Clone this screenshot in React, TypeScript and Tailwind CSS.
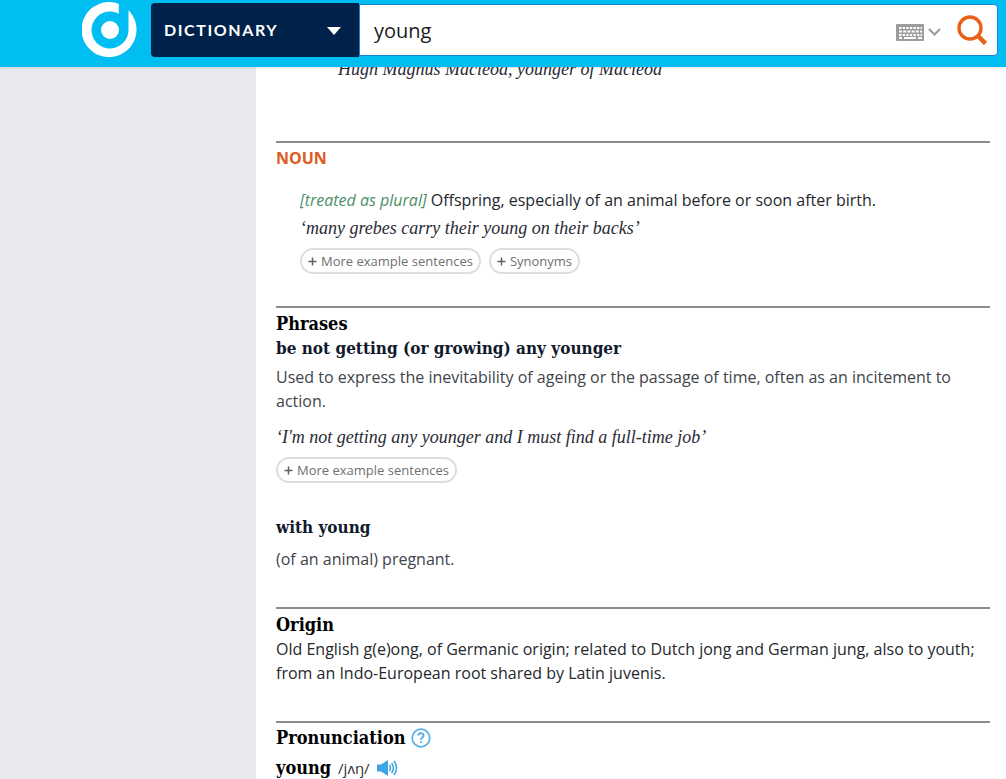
import type { ReactNode } from "react";

const serif = "font-['DejaVu_Serif_Condensed','DejaVu_Serif',serif]";
const quote = "font-['Liberation_Serif',serif] text-lg leading-6 italic text-[#2a2b36]";

function Logo() {
  return (
    <svg viewBox="0 0 56 56" className="size-14" aria-hidden="true">
      <path d="M36.8 1.9A27.5 27.5 0 1 0 46.5 8.2V28A18.5 18.5 0 1 1 36.8 11.7Z" fill="#fff" />
      <circle cx="28" cy="28" r="9" fill="#fff" />
    </svg>
  );
}

function KeyboardIcon() {
  return (
    <svg viewBox="0 0 28 17" className="h-[17px] w-7" aria-hidden="true">
      <rect width="28" height="17" rx="1" fill="#9c9c9c" />
      <g stroke="#fff" strokeWidth="2">
        <path d="M3 4H26" strokeDasharray="2.4 1.2" />
        <path d="M3 7.5H26" strokeDasharray="3 1.2" />
        <path d="M3 11H26" strokeDasharray="2.4 1.2" />
        <path d="M3 14H6M8 14H20M22 14H26" />
      </g>
    </svg>
  );
}

function Pill({ children }: { children: ReactNode }) {
  return (
    <button
      type="button"
      className="flex h-[26px] items-center gap-1 rounded-full border-2 border-[#dedede] px-1.5 text-[13px] text-[#707070]"
    >
      <svg viewBox="0 0 9 9" className="size-[9px]" aria-hidden="true">
        <path d="M4.5 0.5V8.5M0.5 4.5H8.5" stroke="#606060" strokeWidth="1.5" />
      </svg>
      {children}
    </button>
  );
}

function Section({ children, className }: { children: ReactNode; className: string }) {
  return <section className={`border-t-2 border-[#8c8c8c] ${className}`}>{children}</section>;
}

function Heading({ children }: { children: ReactNode }) {
  return <h2 className={`${serif} text-lg leading-6 font-bold text-black`}>{children}</h2>;
}

function Phrase({ children }: { children: ReactNode }) {
  return <h3 className={`${serif} text-[17px] leading-6 font-bold text-[#101a2c]`}>{children}</h3>;
}

export default function App() {
  return (
    <div className="flex h-screen flex-col overflow-hidden bg-white font-['Open_Sans',sans-serif] text-base leading-6 text-[#40454b]">
      <header className="relative z-10 flex shrink-0 items-start bg-[#00bdf2] pt-[3px] pr-2 pb-[9px] pl-[82px] shadow-sm">
        <a href="#home" aria-label="Dictionary home" className="-mt-px mr-[13px] block">
          <Logo />
        </a>
        <div className="relative w-52 shrink-0">
          <select
            aria-label="Search in"
            className="h-[54px] w-full appearance-none rounded-l bg-[#00214a] pl-[13px] font-['Lato',sans-serif] text-base font-bold tracking-widest text-white"
          >
            <option>DICTIONARY</option>
          </select>
          <svg viewBox="0 0 14 8" className="pointer-events-none absolute top-6 right-[18px] h-2 w-[14px]" aria-hidden="true">
            <path d="M0 0H14L7 8Z" fill="#fff" />
          </svg>
        </div>
        <form className="mt-px flex h-[52px] min-w-0 flex-1 items-center rounded-r border border-[#1684cf] bg-white pr-[10px] pl-[14px]">
          <input
            aria-label="Search"
            defaultValue="young"
            className="h-full min-w-0 flex-1 bg-transparent text-xl text-[#1c1c1c] outline-none"
          />
          <button type="button" aria-label="Keyboard" className="mr-4 flex items-center gap-1 pt-1">
            <KeyboardIcon />
            <svg viewBox="0 0 13 8" className="h-2 w-[13px]" aria-hidden="true">
              <path d="M1 1L6.5 6.5L12 1" fill="none" stroke="#999" strokeWidth="2" />
            </svg>
          </button>
          <button type="button" aria-label="Submit search">
            <svg viewBox="0 0 30 30" className="size-[30px]" fill="none" stroke="#e96016" aria-hidden="true">
              <circle cx="13" cy="13" r="11" strokeWidth="3.4" />
              <path d="M21 21L28.5 28.5" strokeWidth="4.5" />
            </svg>
          </button>
        </form>
      </header>

      <div className="flex min-h-0 flex-1">
        <aside className="w-64 shrink-0 bg-[#e8e9ee]" />
        <main className="-mt-[10px] min-w-0 flex-1 pr-4 pl-5">
          <p className={`${quote} mb-[60px] pl-14`}>‘Hugh Magnus Macleod, younger of Macleod’</p>

          <Section className="pt-[3px] pb-8">
            <h2 className="font-bold text-[#df5b20]">NOUN</h2>
            <div className="pt-[18px] pl-6">
              <p className="text-[#25282d]">
                <em className="text-[#4d9069]">[treated as plural]</em> Offspring, especially of an animal before or soon after birth.
              </p>
              <p className={`${quote} mt-1`}>‘many grebes carry their young on their backs’</p>
              <div className="mt-2 flex gap-2">
                <Pill>More example sentences</Pill>
                <Pill>Synonyms</Pill>
              </div>
            </div>
          </Section>

          <Section className="pt-1 pb-9">
            <Heading>Phrases</Heading>
            <Phrase>be not getting (or growing) any younger</Phrase>
            <p className="mt-[5px]">
              Used to express the inevitability of ageing or the passage of time, often as an incitement to action.
            </p>
            <p className={`${quote} mt-3`}>‘I'm not getting any younger and I must find a full-time job’</p>
            <div className="mt-2 mb-8 flex">
              <Pill>More example sentences</Pill>
            </div>
            <Phrase>with young</Phrase>
            <p className="mt-2">(of an animal) pregnant.</p>
          </Section>

          <Section className="pt-1 pb-9">
            <Heading>Origin</Heading>
            <p className="text-[#25282d]">
              Old English g(e)ong, of Germanic origin; related to Dutch jong and German jung, also to youth; from an Indo-European root shared by Latin juvenis.
            </p>
          </Section>

          <Section className="pt-[3px]">
            <div className="flex items-center gap-[5px]">
              <Heading>Pronunciation</Heading>
              <a href="#pronunciation-help" aria-label="Pronunciation help">
                <svg viewBox="0 0 20 20" className="size-5" fill="none" stroke="#5aaee8" strokeWidth="1.7" aria-hidden="true">
                  <circle cx="10" cy="10" r="8.8" />
                  <path d="M7.3 7.5C7.5 4.4 12.7 4.5 12.5 7.6C12.4 9.3 10 9.4 10 11.7M10 13.2V15" strokeWidth="2" />
                </svg>
              </a>
            </div>
            <div className="mt-[6px] flex items-center gap-[7px]">
              <Heading>young</Heading>
              <span className="text-[15px] leading-5 text-[#333]">/jʌŋ/</span>
              <button type="button" aria-label="Play pronunciation">
                <svg viewBox="0 0 21 18" className="h-[18px] w-[21px]" fill="none" stroke="#3fa4e5" strokeWidth="1.5" aria-hidden="true">
                  <path d="M0 5.5H4L11 1V17L4 12.5H0Z" fill="#3fa4e5" stroke="none" />
                  <path d="M12.5 6Q14.5 9 12.5 12M14.7 4Q18 9 14.7 14M17 2Q22 9 17 16" />
                </svg>
              </button>
            </div>
          </Section>
        </main>
      </div>
    </div>
  );
}
